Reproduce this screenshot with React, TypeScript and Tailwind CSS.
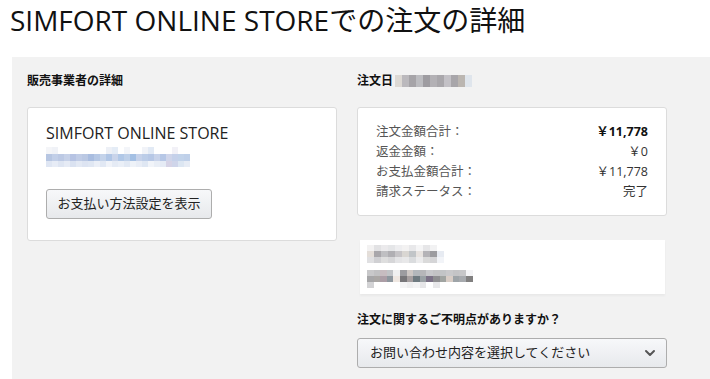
import { ChevronDown } from 'lucide-react';

const font = { fontFamily: '"Open Sans", "Noto Sans CJK JP", sans-serif' };

function Blur({ colors, w = 6, h = 6 }: { colors: string[]; w?: number; h?: number }) {
  return (
    <div className="flex">
      {colors.map((c, i) => (
        <div key={i} style={{ backgroundColor: c, width: w, height: h }} />
      ))}
    </div>
  );
}

const emailTop = ['#f4f5f8', '#f0f2f7', '#fff', '#fff', '#fff', '#fff', '#fff', '#fff', '#fff', '#fff', '#edf0f6', '#e4ecf6', '#fff', '#f3f5f9', '#fff', '#fff', '#f1f3f8', '#e2eaf5', '#fff', '#fff', '#fff', '#f2f1f7', '#fff', '#fff'];
const emailMid = ['#b7c6e2', '#c2cfe8', '#bcc9e4', '#c6d1e8', '#b6c3e3', '#c0cce6', '#bac8e3', '#a9bde0', '#b6c8e5', '#c4d3ea', '#b0c6e6', '#c9d4ea', '#b1c8e7', '#bed0e9', '#a4c0e4', '#c6d2ea', '#bccde8', '#b7c8e6', '#c8d3ea', '#b6c7e6', '#cfd5ea', '#c5d1ea', '#c2d3ea', '#bfd0e9'];
const emailBot = ['#dfe6f3', '#e7ecf6', '#dee5f2', '#e6ebf5', '#dae2f1', '#e3e9f4', '#dde4f2', '#e0e7f3', '#ebeff7', '#e1e8f4', '#f0f3f9', '#e5ebf5', '#eaeff7', '#e2e9f4', '#eef2f8', '#e8edf6', '#dfe7f3', '#f1f4f9', '#e9eef6', '#e5ebf5', '#d6d3e6', '#cfd5ea', '#dce6f2', '#e7ecf5'];

const dateCols = ['#ddd9d4', '#bbb9bd', '#a6a4a8', '#bcbcc0', '#9e9ca1', '#b3b1b5', '#a9a7ab', '#c3c1c6', '#a8a6aa', '#bbb6b1', '#dfe5ec'];

const addr1a = ['#f3f2f2', '#e2e2e4', '#ebeaec', '#e5e6e8', '#eeeef0', '#f3f2f2', '#e8e8ea', '#f5f5f6', '#e6e6e8', '#f2f2f3', '#fff'];
const addr1b = ['#e4ded9', '#a9a7ab', '#bfbfc2', '#b0afb3', '#c6c4c7', '#d9d6d2', '#c1c5c8', '#e7e3e0', '#b4b3b7', '#9c9ca0', '#e7ebf2'];
const addr1c = ['#e0e0e2', '#d0d0d3', '#dedede', '#d6d6d8', '#e4e4e6', '#e8e8e9', '#dadcde', '#ececed', '#dadada', '#d5d5d7', '#f2f4f8'];
const addr2a = ['#c8c8ca', '#c1c1c3', '#c7bcc0', '#c1c3c6', '#f0f0f0', '#9c9ca0', '#cdc7c4', '#b3b7bb', '#b6b6b9', '#c8c8cb', '#c3c3c5', '#c2c4c6', '#c9c9cb', '#c4c4c6', '#c6c6c8', '#f4f4f6'];
const addr2b = ['#a6a6a8', '#aaa7a5', '#ac9ea6', '#8e979e', '#efe7e1', '#777679', '#a69fa0', '#6e7a80', '#9aa1a5', '#7c7287', '#8f8f91', '#a0a4a1', '#d8cdc6', '#9ea4a8', '#a7aaae', '#818080'];
const addr2c = ['#d3d3d5', '#fff', '#fff', '#fff', '#fff', '#f4f4f5', '#eeeeef', '#f3f3f4', '#e6e6e8', '#fff', '#e8e8ea', '#fff', '#fff', '#fff', '#fff', '#fff'];

function Row({ label, value, bold }: { label: string; value: string; bold?: boolean }) {
  return (
    <div className="flex justify-between h-5 items-center">
      <span>{label}</span>
      <span className={bold ? 'font-bold text-[#111]' : 'text-[#333]'}>{value}</span>
    </div>
  );
}

export default function App() {
  return (
    <div className="w-[710px] h-[379px] overflow-hidden bg-white text-[#111]" style={font}>
      <h1 className="pl-[10px] pt-[1px] h-[57px] text-[28px] leading-[38px] text-[#111]">
        SIMFORT ONLINE STOREでの注文の詳細
      </h1>
      <div className="ml-[12px] bg-[#f2f2f2] h-[322px] pl-[15px] pt-[16px] flex gap-[20px]">
        <div className="w-[310px]">
          <h2 className="text-[12px] font-bold leading-4 text-[#111]">販売事業者の詳細</h2>
          <div className="mt-[18px] bg-white border border-[#dcdcdc] rounded-[3px] h-[134px] pl-[18px] pt-[13px]">
            <div className="text-[16px] leading-[24px] text-[#222]">SIMFORT ONLINE STORE</div>
            <div className="mt-[2px] flex flex-col">
              <Blur colors={emailTop} w={6} h={7} />
              <Blur colors={emailMid} w={6} h={7} />
              <Blur colors={emailBot} w={6} h={6} />
            </div>
            <button className="mt-[22px] h-[30px] w-[166px] border border-[#adadad] rounded-[3px] bg-gradient-to-b from-[#f7f8fa] to-[#e7e9ec] text-[13px] text-[#222]">
              お支払い方法設定を表示
            </button>
          </div>
        </div>
        <div className="w-[310px]">
          <div className="flex items-center h-4">
            <h2 className="text-[12px] font-bold leading-4 text-[#111]">注文日</h2>
            <div className="ml-[2px]">
              <Blur colors={dateCols} w={7} h={12} />
            </div>
          </div>
          <div className="mt-[18px] bg-white border border-[#dcdcdc] rounded-[3px] h-[109px] pl-[18px] pr-[18px] pt-[14px] text-[12.5px] text-[#555]">
            <Row label="注文金額合計：" value="￥11,778" bold />
            <Row label="返金金額：" value="￥0" />
            <Row label="お支払金額合計：" value="￥11,778" />
            <Row label="請求ステータス：" value="完了" />
          </div>
          <div className="mt-[24px] ml-[3px] w-[305px] h-[54px] bg-white shadow-[0_2px_2px_rgba(0,0,0,0.04)] pl-[7px] pt-[5px]">
            <div className="flex flex-col">
              <Blur colors={addr1a} w={7} h={6} />
              <Blur colors={addr1b} w={7} h={6} />
              <Blur colors={addr1c} w={7} h={6} />
            </div>
            <div className="mt-[7px] flex flex-col">
              <Blur colors={addr2a} w={6.6} h={6} />
              <Blur colors={addr2b} w={6.6} h={6} />
              <Blur colors={addr2c} w={6.6} h={6} />
            </div>
          </div>
          <h2 className="mt-[18px] text-[12px] font-bold leading-4 text-[#111]">注文に関するご不明点がありますか？</h2>
          <div className="mt-[10px] h-[30px] border border-[#adadad] rounded-[3px] bg-gradient-to-b from-[#f7f8fa] to-[#e7e9ec] flex items-center justify-between pl-[12px] pr-[8px] text-[13px] text-[#222]">
            <span>お問い合わせ内容を選択してください</span>
            <ChevronDown className="w-4 h-4 text-[#555]" strokeWidth={3} />
          </div>
        </div>
      </div>
    </div>
  );
}
